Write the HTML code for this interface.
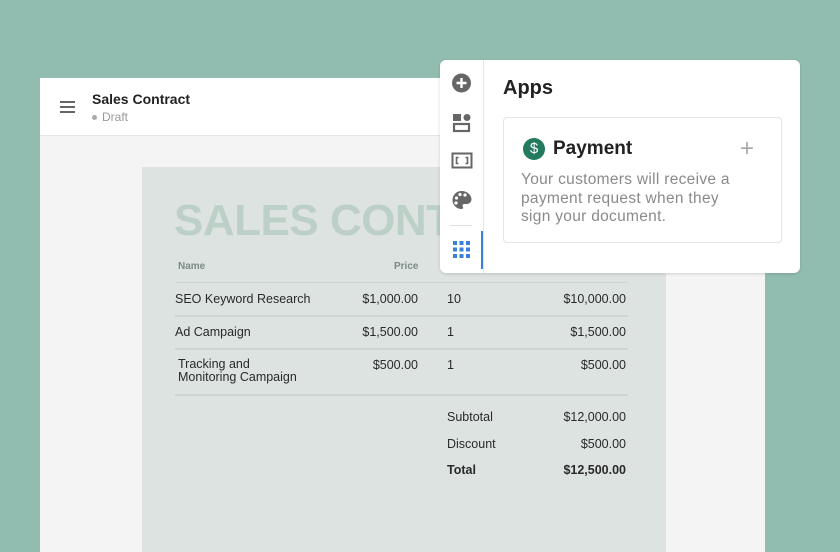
<!DOCTYPE html>
<html><head><style>
*{margin:0;padding:0;box-sizing:border-box}
body{width:840px;height:552px;background:#91bdb0;position:relative;overflow:hidden;font-family:"Liberation Sans",sans-serif}
.abs{position:absolute}
.win{left:40px;top:78px;width:725px;height:474px;background:#f4f4f4}
.hdr{left:40px;top:78px;width:725px;height:58px;background:#fff;border-bottom:1px solid #e6e6e6}
.doc{left:142px;top:167px;width:524px;height:385px;background:#dce3e0}
.t{font-size:12.5px;color:#2a2a2a;white-space:nowrap}
.r{text-align:right}
.line{height:2px;background:#cdd6d2;left:175px;width:453px}
.panel{left:440px;top:60px;width:360px;height:213px;background:#fff;border-radius:6px;box-shadow:0 1px 3px rgba(0,0,0,.15)}
</style></head><body>
<div class="abs win"></div>
<div class="abs hdr"></div>
<div class="abs" style="left:60px;top:101px;width:15px;height:2px;background:#666;box-shadow:0 5px 0 #666,0 10px 0 #666"></div>
<div class="abs" style="left:92px;top:91px;font-size:14px;font-weight:bold;color:#222">Sales Contract</div>
<div class="abs" style="left:92px;top:110px;font-size:12px;color:#999"><span style="display:inline-block;width:5px;height:5px;border-radius:50%;background:#aaa;vertical-align:middle;margin-right:5px"></span>Draft</div>
<div class="abs doc"></div>
<div class="abs" style="left:174px;top:196px;font-size:44px;font-weight:bold;color:#bdd0c8;letter-spacing:-0.5px;white-space:nowrap">SALES CONT</div>
<div class="abs t" style="left:178px;top:261px;font-size:10px;font-weight:bold;color:#7b8a85">Name</div>
<div class="abs t" style="left:394px;top:261px;font-size:10px;font-weight:bold;color:#7b8a85">Price</div>
<div class="abs line" style="top:282px;height:1px"></div>
<div class="abs t" style="left:175px;top:292px">SEO Keyword Research</div>
<div class="abs t r" style="left:318px;width:100px;top:292px">$1,000.00</div>
<div class="abs t" style="left:447px;top:292px">10</div>
<div class="abs t r" style="left:526px;width:100px;top:292px">$10,000.00</div>
<div class="abs line" style="top:315px"></div>
<div class="abs t" style="left:175px;top:325px">Ad Campaign</div>
<div class="abs t r" style="left:318px;width:100px;top:325px">$1,500.00</div>
<div class="abs t" style="left:447px;top:325px">1</div>
<div class="abs t r" style="left:526px;width:100px;top:325px">$1,500.00</div>
<div class="abs line" style="top:348px"></div>
<div class="abs t" style="left:178px;top:358px;line-height:13px">Tracking and<br>Monitoring Campaign</div>
<div class="abs t r" style="left:318px;width:100px;top:358px">$500.00</div>
<div class="abs t" style="left:447px;top:358px">1</div>
<div class="abs t r" style="left:526px;width:100px;top:358px">$500.00</div>
<div class="abs line" style="top:394px"></div>
<div class="abs t" style="left:447px;top:410px">Subtotal</div>
<div class="abs t r" style="left:526px;width:100px;top:410px">$12,000.00</div>
<div class="abs t" style="left:447px;top:437px">Discount</div>
<div class="abs t r" style="left:526px;width:100px;top:437px">$500.00</div>
<div class="abs t" style="left:447px;top:463px;font-weight:bold">Total</div>
<div class="abs t r" style="left:506px;width:120px;top:463px;font-weight:bold">$12,500.00</div>

<div class="abs panel"></div>
<div class="abs" style="left:483px;top:60px;width:1px;height:213px;background:#e6e6e6"></div>
<svg class="abs" style="left:440px;top:60px" width="44" height="213">
<circle cx="21.5" cy="23" r="9.5" fill="#666"/><path d="M21.5 18v10M16.5 23h10" stroke="#fff" stroke-width="2.4"/>
<rect x="13" y="54" width="8" height="7" fill="#666"/><circle cx="27" cy="57.5" r="3.5" fill="#666"/><rect x="14" y="64" width="15" height="7" fill="none" stroke="#666" stroke-width="2.2"/>
<rect x="12.5" y="93.5" width="19" height="14" fill="none" stroke="#666" stroke-width="2"/><path d="M18.5 97.5h-2v6h2M25.5 97.5h2v6h-2" fill="none" stroke="#666" stroke-width="1.6"/>
<path d="M21.5 131a9 9 0 1 0 0 18c1.5 0 2-1 1.3-2.2-.8-1.3 0-2.8 1.6-2.8h2.6a4.5 4.5 0 0 0 4.5-4.5c0-4.8-4.5-8.5-10-8.5z" fill="#666"/>
<circle cx="16.5" cy="138" r="1.6" fill="#fff"/><circle cx="20" cy="134.5" r="1.6" fill="#fff"/><circle cx="25" cy="135" r="1.6" fill="#fff"/><circle cx="16" cy="143" r="1.6" fill="#fff"/>
<rect x="10" y="165" width="22" height="1" fill="#e0e0e0"/>
<g fill="#3a7fd9"><rect x="13" y="181" width="4" height="4"/><rect x="19.5" y="181" width="4" height="4"/><rect x="26" y="181" width="4" height="4"/><rect x="13" y="187.5" width="4" height="4"/><rect x="19.5" y="187.5" width="4" height="4"/><rect x="26" y="187.5" width="4" height="4"/><rect x="13" y="194" width="4" height="4"/><rect x="19.5" y="194" width="4" height="4"/><rect x="26" y="194" width="4" height="4"/></g>
<rect x="41" y="171" width="2" height="38" fill="#3a7fd9"/>
</svg>
<div class="abs" style="left:503px;top:77px;font-size:20px;font-weight:bold;color:#222">Apps</div>
<div class="abs" style="left:503px;top:117px;width:279px;height:126px;border:1px solid #e4e4e4;border-radius:4px"></div>
<div class="abs" style="left:523px;top:138px;width:22px;height:22px;border-radius:50%;background:#237a5f;color:#fff;font-size:15px;text-align:center;line-height:22px">$</div>
<div class="abs" style="left:553px;top:138px;font-size:19px;font-weight:bold;color:#222">Payment</div>
<div class="abs" style="left:740px;top:135px;font-size:24px;color:#aaa">+</div>
<div class="abs" style="left:521px;top:171px;width:232px;font-size:15.5px;line-height:18.5px;letter-spacing:0.3px;color:#8a8a8a">Your customers will receive a payment request when they sign your document.</div>
</body></html>
